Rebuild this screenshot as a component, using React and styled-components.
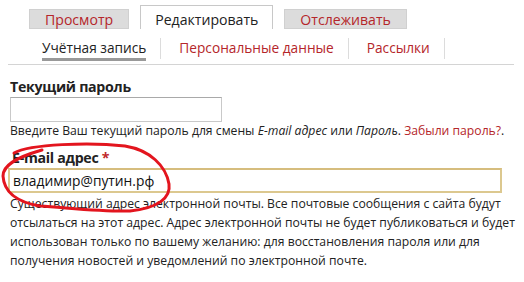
import React from 'react'
import styled, { createGlobalStyle } from 'styled-components'

const Global = createGlobalStyle`
  body {
    margin: 0;
    background: #fff;
    font-family: "Open Sans", "Noto Sans", sans-serif;
    color: #222;
  }
`

const Page = styled.div`
  width: 524px;
  height: 282px;
  overflow: hidden;
  position: relative;
`

const PrimaryTabs = styled.ul`
  display: flex;
  gap: 11px;
  margin: 0;
  padding: 5px 0 0 29px;
  list-style: none;
  align-items: flex-end;
`

const PrimaryTab = styled.li`
  height: ${p => (p.$active ? '24px' : '20px')};
  padding: 0 ${p => (p.$active ? '14px' : '15px')};
  box-sizing: border-box;
  display: flex;
  align-items: center;
  font-size: 14.1px;
  color: ${p => (p.$active ? '#222' : '#b5262a')};
  background: ${p => (p.$active ? '#fff' : '#dcdcdc')};
  border: 1px solid ${p => (p.$active ? '#c8c8c8' : '#d0d0d0')};
  border-bottom: ${p => (p.$active ? 'none' : '1px solid #d0d0d0')};
  padding-top: ${p => (p.$active ? '4px' : '0')};
`

const SecondaryTabs = styled.ul`
  display: flex;
  margin: 9px 10px 0 8px;
  padding: 0 0 0 16px;
  list-style: none;
  border-bottom: 1px solid #d4d4d4;
  height: 26px;
`

const SecondaryTab = styled.li`
  padding: 0 14px 0 18px;
  border-right: 1px solid #dcdcdc;
  height: 21px;
  display: flex;
  align-items: flex-start;
  font-size: 13.7px;
  color: ${p => (p.$active ? '#222' : '#b5262a')};
  span {
    display: block;
    padding-bottom: 1px;
    border-bottom: ${p => (p.$active ? '3px solid #999' : '3px solid transparent')};
  }
`

const Form = styled.div`
  padding: 13px 4px 0 10px;
`

const Label = styled.div`
  font-weight: 700;
  font-size: 14.2px;
  letter-spacing: -0.3px;
  padding-left: ${p => p.$indent || 0}px;
  line-height: 18px;
  em {
    font-style: normal;
    color: #c0282b;
  }
`

const Input = styled.div`
  box-sizing: border-box;
  width: ${p => p.$width};
  height: 25px;
  margin-top: ${p => p.$mt || 1}px;
  margin-left: ${p => p.$ml || 0}px;
  border: ${p => (p.$focus ? '2px solid #dcc88f' : '1px solid #c9c9c9')};
  border-top-color: ${p => (p.$focus ? '#d6bd7e' : '#a9a9a9')};
  display: flex;
  align-items: center;
  padding-left: 3px;
  font-size: 13.8px;
  color: #111;
`

const Desc = styled.div`
  font-size: 12.2px;
  line-height: 19px;
  margin-top: ${p => p.$mt || 0}px;
  color: #222;
  i {
    font-style: italic;
  }
  a {
    color: #b5262a;
    text-decoration: none;
  }
`

const Item = styled.div`
  margin-bottom: ${p => p.$mb || 0}px;
`

const Scribble = styled.svg`
  position: absolute;
  left: 0;
  top: 140px;
  pointer-events: none;
`

export default function App() {
  return (
    <Page>
      <Global />
      <PrimaryTabs>
        <PrimaryTab>Просмотр</PrimaryTab>
        <PrimaryTab $active>Редактировать</PrimaryTab>
        <PrimaryTab>Отслеживать</PrimaryTab>
      </PrimaryTabs>
      <SecondaryTabs>
        <SecondaryTab $active><span>Учётная запись</span></SecondaryTab>
        <SecondaryTab><span>Персональные данные</span></SecondaryTab>
        <SecondaryTab><span>Рассылки</span></SecondaryTab>
      </SecondaryTabs>
      <Form>
        <Item $mb={9}>
          <Label>Текущий пароль</Label>
          <Input $width="212px" />
          <Desc $mt={-1}>
            Введите Ваш текущий пароль для смены <i>E-mail адрес</i> или <i>Пароль</i>. <a>Забыли пароль?</a>.
          </Desc>
        </Item>
        <Item>
          <Label $indent={2}>E-mail адрес <em>*</em></Label>
          <Input $width="494px" $ml={-2} $focus>владимир@путин.рф</Input>
          <Desc $mt={1}>
            Существующий адрес электронной почты. Все почтовые сообщения с сайта будут
            отсылаться на этот адрес. Адрес электронной почты не будет публиковаться и будет
            использован только по вашему желанию: для восстановления пароля или для
            получения новостей и уведомлений по электронной почте.
          </Desc>
        </Item>
      </Form>
      <Scribble width="200" height="80" viewBox="0 0 200 80">
        <path
          d="M 14 13 C 30 4, 90 2, 125 6 C 150 10, 166 26, 169 44 C 171 58, 158 68, 130 71 C 105 72, 70 68, 40 66 C 16 62, 4 52, 3 36 C 3 26, 14 18, 42 10"
          fill="none"
          stroke="#e3151e"
          strokeWidth="3"
          strokeLinecap="round"
        />
      </Scribble>
    </Page>
  )
}
